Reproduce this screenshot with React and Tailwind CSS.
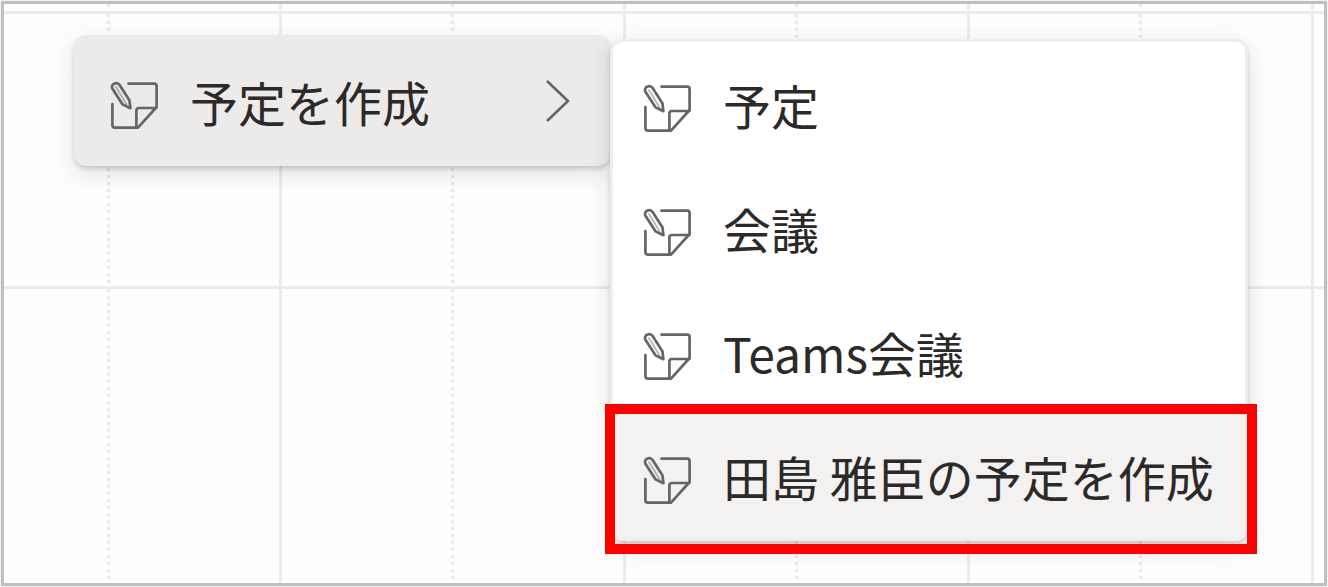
function NoteIcon() {
  return (
    <svg
      className="mt-2 size-12 shrink-0"
      viewBox="0 0 48 48"
      fill="none"
      stroke="#666564"
      strokeWidth="2.7"
      strokeLinejoin="round"
      strokeLinecap="round"
      aria-hidden="true"
    >
      <path d="M18.5 2.7H44.3Q46.6 2.7 46.6 5.4V26L28 46.6H5Q2.4 46.6 2.4 44V23" />
      <path d="M46.2 27H29Q26.4 27 26.4 29.5V46" />
      <path d="M3 3.4Q6.5 0.8 9.3 3.6L19.4 19.2L20.4 27.2L12.6 23.4L2.6 8Q1.2 5.6 3 3.4Z" />
      <path d="M6 6L16.4 23" strokeWidth="2" opacity="0.45" />
    </svg>
  );
}

function ChevronIcon() {
  return (
    <svg className="h-11 w-6 shrink-0" viewBox="0 0 24 44" fill="none" stroke="#666564" strokeWidth="2.6" aria-hidden="true">
      <path d="M1 2L22 22L1 42" />
    </svg>
  );
}

// Vertical separators alternate between half-hour dots and full-hour lines.
const slots = ["dotted", "solid", "dotted", "solid", "dotted", "solid", "dotted", "solid", "none"];

const lineStyles = {
  dotted: "w-[3px] bg-[repeating-linear-gradient(to_bottom,#e9e8e6_0px,#e9e8e6_3px,transparent_3px,transparent_7px)]",
  solid: "w-[3px] bg-[#edecea]",
  none: "w-0",
};

function TimeRow({ className }) {
  return (
    <div
      className={`grid grid-cols-[106fr_172fr_172fr_172fr_172fr_172fr_172fr_172fr_10fr] ${className}`}
    >
      {slots.map((kind, i) => (
        <div key={i} className="flex justify-end">
          <div className={lineStyles[kind]} />
        </div>
      ))}
    </div>
  );
}

const items = ["予定", "会議", "Teams会議"];
const itemClass = "flex h-[124px] w-full items-center gap-8 px-[30px] text-left whitespace-nowrap";

export default function App() {
  return (
    <main className="flex min-h-screen bg-[#f3f3f3] p-px font-['Noto_Sans_CJK_JP',sans-serif] text-5xl leading-none text-[#2b2a29]">
      <div className="relative flex flex-1 flex-col border-3 border-[#bfbfbf] bg-[#fefefe]">
        <TimeRow className="h-[10px] border-b-3 border-[#edecea]" />
        <TimeRow className="h-[275px] border-b-3 border-[#edecea]" />
        <TimeRow className="flex-1" />

        <div className="absolute top-[31px] left-[70px] flex items-start">
          <div className="w-[536px] rounded-xl bg-[#ecebe9] shadow-[0_3px_4px_rgba(0,0,0,0.14),0_8px_24px_rgba(0,0,0,0.12)]" role="menu">
            <button type="button" role="menuitem" className="flex h-[131px] w-full items-center gap-8 pr-10 pl-9 text-left whitespace-nowrap">
              <NoteIcon />
              <span className="flex-1">予定を作成</span>
              <ChevronIcon />
            </button>
          </div>

          <div className="relative mt-1 w-[638px] rounded-xl border-3 border-[#efeeec] bg-white shadow-[0_3px_4px_rgba(0,0,0,0.14),0_6px_24px_rgba(0,0,0,0.12)]" role="menu">
            {items.map((label) => (
              <button key={label} type="button" role="menuitem" className={itemClass}>
                <NoteIcon />
                <span>{label}</span>
              </button>
            ))}
            <button type="button" role="menuitem" className={`${itemClass} rounded-b-lg bg-[#f3f2f0]`}>
              <NoteIcon />
              <span>田島 雅臣の予定を作成</span>
            </button>
            <div className="pointer-events-none absolute -right-3 -bottom-4 -left-2 h-[150px] border-10 border-[#ff0000]" />
          </div>
        </div>
      </div>
    </main>
  );
}
